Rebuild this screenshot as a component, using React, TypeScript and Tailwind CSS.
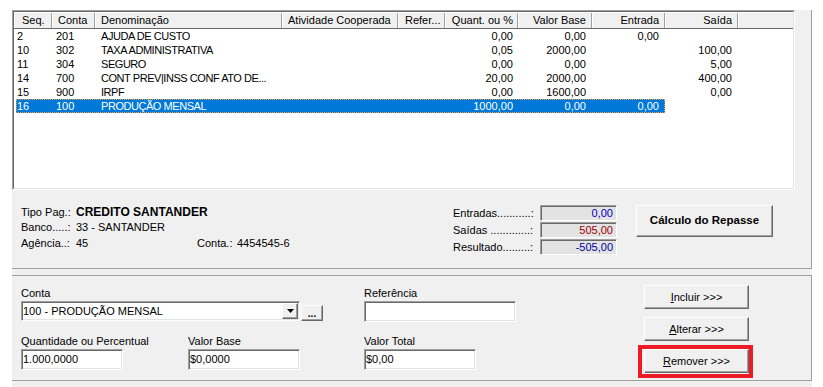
import React from 'react';

interface Linha {
  seq: string;
  conta: string;
  denominacao: string;
  quant: string;
  valorBase: string;
  entrada: string;
  saida: string;
  selected?: boolean;
}

const linhas: Linha[] = [
  { seq: '2', conta: '201', denominacao: 'AJUDA DE CUSTO', quant: '0,00', valorBase: '0,00', entrada: '0,00', saida: '' },
  { seq: '10', conta: '302', denominacao: 'TAXA ADMINISTRATIVA', quant: '0,05', valorBase: '2000,00', entrada: '', saida: '100,00' },
  { seq: '11', conta: '304', denominacao: 'SEGURO', quant: '0,00', valorBase: '0,00', entrada: '', saida: '5,00' },
  { seq: '14', conta: '700', denominacao: 'CONT PREV|INSS CONF ATO DE...', quant: '20,00', valorBase: '2000,00', entrada: '', saida: '400,00' },
  { seq: '15', conta: '900', denominacao: 'IRPF', quant: '0,00', valorBase: '1600,00', entrada: '', saida: '0,00' },
  { seq: '16', conta: '100', denominacao: 'PRODUÇÃO MENSAL', quant: '1000,00', valorBase: '0,00', entrada: '0,00', saida: '', selected: true },
];

// sunken edit box (classic windows look)
const sunken =
  'border border-t-[#a0a0a0] border-l-[#a0a0a0] border-b-white border-r-white shadow-[inset_1px_1px_0_#696969,inset_-1px_-1px_0_#e3e3e3]';
const raised =
  'border border-t-white border-l-white border-r-[#696969] border-b-[#696969] shadow-[inset_-1px_-1px_0_#a0a0a0] bg-[#f0f0f0]';

const HeaderCell = ({ w, label, right, pad }: { w: string; label: string; right?: boolean; pad: string }) => (
  <div
    className={`${w} h-full shrink-0 border-l border-l-white border-r border-r-[#a0a0a0] ${pad} ${
      right ? 'text-right' : 'text-left'
    } whitespace-nowrap overflow-hidden`}
  >
    {label}
  </div>
);

const Row = ({ l }: { l: Linha }) => {
  const cells = (
    <>
      <div className="w-[36px] shrink-0 pl-[1px]">{l.seq}</div>
      <div className="w-[43px] shrink-0 pl-[4px]">{l.conta}</div>
      <div className="w-[187px] shrink-0 pl-[6px] tracking-[-0.45px] whitespace-nowrap overflow-hidden">{l.denominacao}</div>
      <div className="w-[116px] shrink-0" />
      <div className="w-[47px] shrink-0" />
      <div className="w-[73px] shrink-0 pr-[5px] text-right">{l.quant}</div>
      <div className="w-[74px] shrink-0 pr-[6px] text-right">{l.valorBase}</div>
      <div className="w-[73px] shrink-0 pr-[6px] text-right">{l.entrada}</div>
    </>
  );
  return (
    <div className="flex h-[14px] leading-[14px] pl-[2px]">
      {l.selected ? (
        <div className="flex bg-[#0078d7] text-white outline-1 outline-dotted outline-[#e8a050] -outline-offset-1">{cells}</div>
      ) : (
        cells
      )}
      <div className="w-[73px] shrink-0 pr-[6px] text-right">{l.saida}</div>
    </div>
  );
};

const Button = ({ children, className }: { children: React.ReactNode; className: string }) => (
  <div className={`${raised} ${className} flex items-center justify-center`}>{children}</div>
);

export default function App() {
  return (
    <div className="w-[823px] h-[387px] bg-white pt-[10px] pl-[12px] text-[11px] text-black font-['Liberation_Sans',Arial,sans-serif] overflow-hidden">
      <div className="w-[800px] h-[377px] bg-[#f0f0f0]">
        {/* painel superior */}
        <div className="h-[259px] border-r border-b border-[#a0a0a0]">
          {/* lista */}
          <div className="w-[783px] h-[180px] border border-t-[#a0a0a0] border-l-[#a0a0a0] border-r-white border-b-white">
            <div className="w-full h-full border border-t-[#696969] border-l-[#696969] border-r-[#e3e3e3] border-b-[#e3e3e3] bg-white">
              <div className="flex h-[17px] leading-[15px] bg-[#f0f0f0] border-t border-t-white border-b border-b-[#696969]">
                <HeaderCell w="w-[38px]" label="Seq." pad="pl-[7px]" />
                <HeaderCell w="w-[43px]" label="Conta" pad="pl-[5px]" />
                <HeaderCell w="w-[187px]" label="Denominação" pad="pl-[5px]" />
                <HeaderCell w="w-[116px]" label="Atividade Cooperada" pad="pl-[5px]" />
                <HeaderCell w="w-[47px]" label="Refer..." pad="pl-[6px]" />
                <HeaderCell w="w-[73px]" label="Quant. ou %" right pad="pr-[4px]" />
                <HeaderCell w="w-[74px]" label="Valor Base" right pad="pr-[5px]" />
                <HeaderCell w="w-[73px]" label="Entrada" right pad="pr-[5px]" />
                <HeaderCell w="w-[73px]" label="Saída" right pad="pr-[5px]" />
                <div className="flex-1 border-l border-l-white" />
              </div>
              {linhas.map((l) => (
                <Row key={l.seq} l={l} />
              ))}
            </div>
          </div>

          {/* dados bancarios e totais */}
          <div className="flex h-[78px] pt-[15px] pl-[9px]">
            <div className="w-[432px] leading-[15px]">
              <div className="flex h-[15px] items-center">
                <div className="w-[55px]">Tipo Pag.:</div>
                <div className="font-bold text-[12px]">CREDITO SANTANDER</div>
              </div>
              <div className="flex h-[15px] items-center">
                <div className="w-[55px]">Banco.....:</div>
                <div>33 - SANTANDER</div>
              </div>
              <div className="flex h-[16px] items-center">
                <div className="w-[55px]">Agência..:</div>
                <div className="w-[121px]">45</div>
                <div className="w-[40px]">Conta.:</div>
                <div>4454545-6</div>
              </div>
            </div>
            <div className="flex flex-col gap-[1px]">
              {[
                { label: 'Entradas...........:', value: '0,00', color: 'text-[#0000c8]' },
                { label: 'Saídas .............:', value: '505,00', color: 'text-[#a00000]' },
                { label: 'Resultado.........:', value: '-505,00', color: 'text-[#0000a0]' },
              ].map((t) => (
                <div key={t.label} className="flex h-[16px] items-center">
                  <div className="w-[87px] whitespace-nowrap">{t.label}</div>
                  <div className={`w-[77px] h-[16px] leading-[14px] pr-[3px] text-right bg-[#e3e3e3] ${sunken} ${t.color}`}>
                    {t.value}
                  </div>
                </div>
              ))}
            </div>
            <Button className="ml-[19px] w-[137px] h-[32px] font-bold text-[11.5px]">Cálculo do Repasse</Button>
          </div>
        </div>

        {/* painel inferior */}
        <div className="mt-[6px] h-[106px] border-t border-b border-r border-[#a0a0a0] flex pl-[9px]">
          <div className="w-[623px] pt-[11px]">
            <div className="flex">
              <div className="w-[343px]">
                <div className="h-[13px] leading-[13px] mb-[1px]">Conta</div>
                <div className="flex items-end">
                  <div className={`w-[279px] h-[20px] bg-white ${sunken} flex items-center pl-[1px] pr-[1px]`}>
                    <div className="flex-1 leading-[16px]">100 - PRODUÇÃO MENSAL</div>
                    <div className={`${raised} w-[16px] h-[16px] flex items-center justify-center`}>
                      <svg width="7" height="4" viewBox="0 0 7 4">
                        <path d="M0 0h7L3.5 4z" fill="#000" />
                      </svg>
                    </div>
                  </div>
                  <div className={`${raised} ml-[1px] w-[22px] h-[16px] flex items-end justify-center font-bold leading-[12px] text-[10px]`}>
                    ...
                  </div>
                </div>
              </div>
              <div>
                <div className="h-[13px] leading-[13px] mb-[1px]">Referência</div>
                <div className={`w-[152px] h-[21px] bg-white ${sunken}`} />
              </div>
            </div>
            <div className="flex mt-[13px]">
              <div className="w-[167px]">
                <div className="h-[13px] leading-[13px] mb-[1px]">Quantidade ou Percentual</div>
                <div className={`w-[102px] h-[21px] bg-white ${sunken} pl-[1px] leading-[19px]`}>1.000,0000</div>
              </div>
              <div className="w-[176px]">
                <div className="h-[13px] leading-[13px] mb-[1px]">Valor Base</div>
                <div className={`w-[112px] h-[21px] bg-white ${sunken} pl-[1px] leading-[19px]`}>$0,0000</div>
              </div>
              <div>
                <div className="h-[13px] leading-[13px] mb-[1px]">Valor Total</div>
                <div className={`w-[112px] h-[21px] bg-white ${sunken} pl-[1px] leading-[19px]`}>$0,00</div>
              </div>
            </div>
          </div>
          <div className="w-[105px] pt-[9px] flex flex-col gap-[8px]">
            <Button className="h-[24px]">
              <span>
                <span className="underline">I</span>ncluir &gt;&gt;&gt;
              </span>
            </Button>
            <Button className="h-[24px]">
              <span>
                <span className="underline">A</span>lterar &gt;&gt;&gt;
              </span>
            </Button>
            <div className="relative">
              <Button className="h-[24px]">
                <span>
                  <span className="underline">R</span>emover &gt;&gt;&gt;
                </span>
              </Button>
              <div className="absolute -left-[6px] -top-[4px] -right-[4px] -bottom-[5px] border-[4px] border-[#ed1c24] pointer-events-none" />
            </div>
          </div>
        </div>
      </div>
    </div>
  );
}
